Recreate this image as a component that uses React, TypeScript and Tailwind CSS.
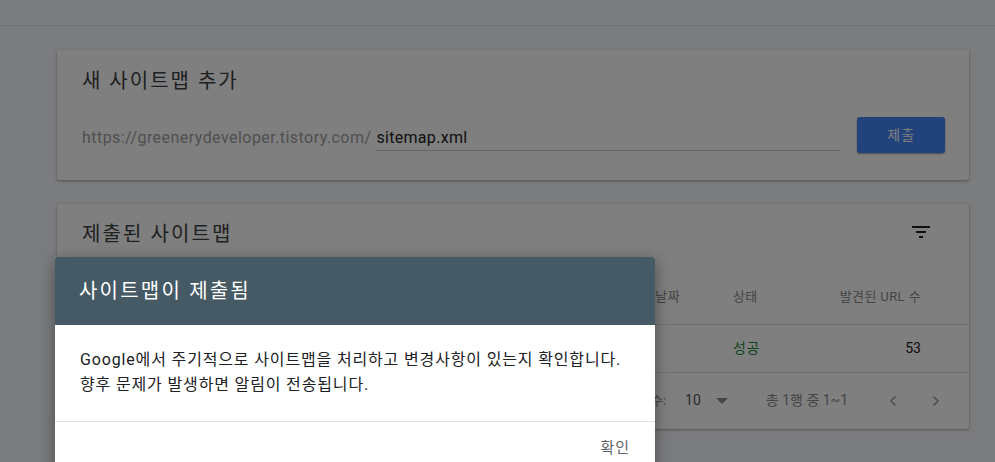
import React from "react";

const font = "font-['Roboto','Noto_Sans_CJK_KR',sans-serif]";

function FilterIcon() {
    return (
        <svg width="24" height="24" viewBox="0 0 24 24" className="fill-[#202124]">
            <path d="M3 6h18v2H3zM7 11h10v2H7zM10 16h4v2h-4z" />
        </svg>
    );
}

function Chevron({ dir }: { dir: "left" | "right" }) {
    return (
        <svg width="24" height="24" viewBox="0 0 24 24" className="fill-none stroke-[#9aa0a6]" strokeWidth={1.6}>
            {dir === "left" ? <path d="M14.5 7.5 10 12l4.5 4.5" /> : <path d="M9.5 7.5 14 12l-4.5 4.5" />}
        </svg>
    );
}

function AddSitemapCard() {
    return (
        <div className="h-[130px] bg-white rounded-[2px] shadow-[0_1px_3px_rgba(0,0,0,0.35)] pl-[25px] pr-[24px] pt-[17px]">
            <h2 className="text-[20px] leading-[28px] tracking-[2px] text-[#3c4043]">새 사이트맵 추가</h2>
            <div className="mt-[22px] flex h-[36px] items-start">
                <span className="pt-[9px] text-[16px] leading-[24px] tracking-[0.45px] text-[#a0a0a0]">
                    https://greenerydeveloper.tistory.com/
                </span>
                <div className="ml-[5px] w-[466px] border-b border-[#cfcfcf] pt-[9px] text-[16px] leading-[24px] tracking-[0.3px] text-[#222]">
                    sitemap.xml
                </div>
                <button className="ml-[17px] h-[36px] w-[88px] rounded-[3px] bg-[#4285f4] text-[14px] tracking-[1px] text-white shadow-[0_1px_2px_rgba(0,0,0,0.4)]">
                    제출
                </button>
            </div>
        </div>
    );
}

function SubmittedCard() {
    return (
        <div className="h-[225px] bg-white rounded-[2px] shadow-[0_1px_3px_rgba(0,0,0,0.35)]">
            <div className="flex h-[65px] items-start justify-between pl-[25px] pr-[36px] pt-[16px]">
                <h2 className="text-[20px] leading-[28px] tracking-[2.1px] text-[#3c4043]">제출된 사이트맵</h2>
                <FilterIcon />
            </div>
            {/* left columns sit under the dialog */}
            <div className="flex h-[56px] items-center border-b border-[#e0e0e0] pl-[25px] pr-[48px] text-[13px] tracking-[0.4px] text-[#8a8a8a]">
                <div className="flex-1 text-right">마지막 읽은 날짜</div>
                <div className="w-[131px] pl-[53px]">상태</div>
                <div className="w-[110px] text-right">발견된 URL 수</div>
            </div>
            <div className="flex h-[48px] items-center border-b border-[#e0e0e0] pl-[25px] pr-[48px] text-[14px] text-[#222]">
                <div className="flex-1"></div>
                <div className="w-[131px] pl-[53px] tracking-[0.5px] text-[#1e8e3e]">성공</div>
                <div className="w-[110px] text-right">53</div>
            </div>
            <div className="flex h-[55px] items-center justify-end pr-[21px] text-[13px] text-[#8a8a8a]">
                <span>행 수:</span>
                <span className="ml-[19px] text-[14px] text-[#555]">10</span>
                <svg width="12" height="6" viewBox="0 0 12 6" className="ml-[15px] fill-[#8a8a8a]">
                    <path d="M0 0h12L6 6z" />
                </svg>
                <span className="ml-[38px] text-[14px]">총 1행 중 1~1</span>
                <div className="ml-[33px]">
                    <Chevron dir="left" />
                </div>
                <div className="ml-[19px]">
                    <Chevron dir="right" />
                </div>
            </div>
        </div>
    );
}

function SubmittedDialog() {
    return (
        <div className="absolute left-[55px] top-[257px] w-[600px] overflow-hidden rounded-t-[2px] bg-white shadow-[0_4px_16px_rgba(0,0,0,0.4)]">
            <div className="flex h-[68px] items-center bg-[#455a64] pl-[24px]">
                <h3 className="text-[20px] tracking-[2.2px] text-white">사이트맵이 제출됨</h3>
            </div>
            <div className="border-b border-[#e0e0e0] pl-[25px] pr-[20px] pt-[23px] pb-[24px] text-[16px] leading-[24.5px] tracking-[0.85px] text-[#202124]">
                <p>Google에서 주기적으로 사이트맵을 처리하고 변경사항이 있는지 확인합니다.</p>
                <p>향후 문제가 발생하면 알림이 전송됩니다.</p>
            </div>
            <div className="flex h-[52px] items-center justify-end pr-[25px]">
                <button className="text-[15px] tracking-[1px] text-[#5f6368]">확인</button>
            </div>
        </div>
    );
}

export default function App() {
    return (
        <div className={`relative h-[462px] w-[995px] overflow-hidden bg-[#f7f8fc] ${font}`}>
            <div className="h-[26px] border-b border-[#e3e5ea]"></div>
            <div className="flex flex-col gap-[24px] pl-[57px] pr-[26px] pt-[24px]">
                <AddSitemapCard />
                <SubmittedCard />
            </div>
            <div className="absolute inset-0 bg-black/50"></div>
            <SubmittedDialog />
        </div>
    );
}
